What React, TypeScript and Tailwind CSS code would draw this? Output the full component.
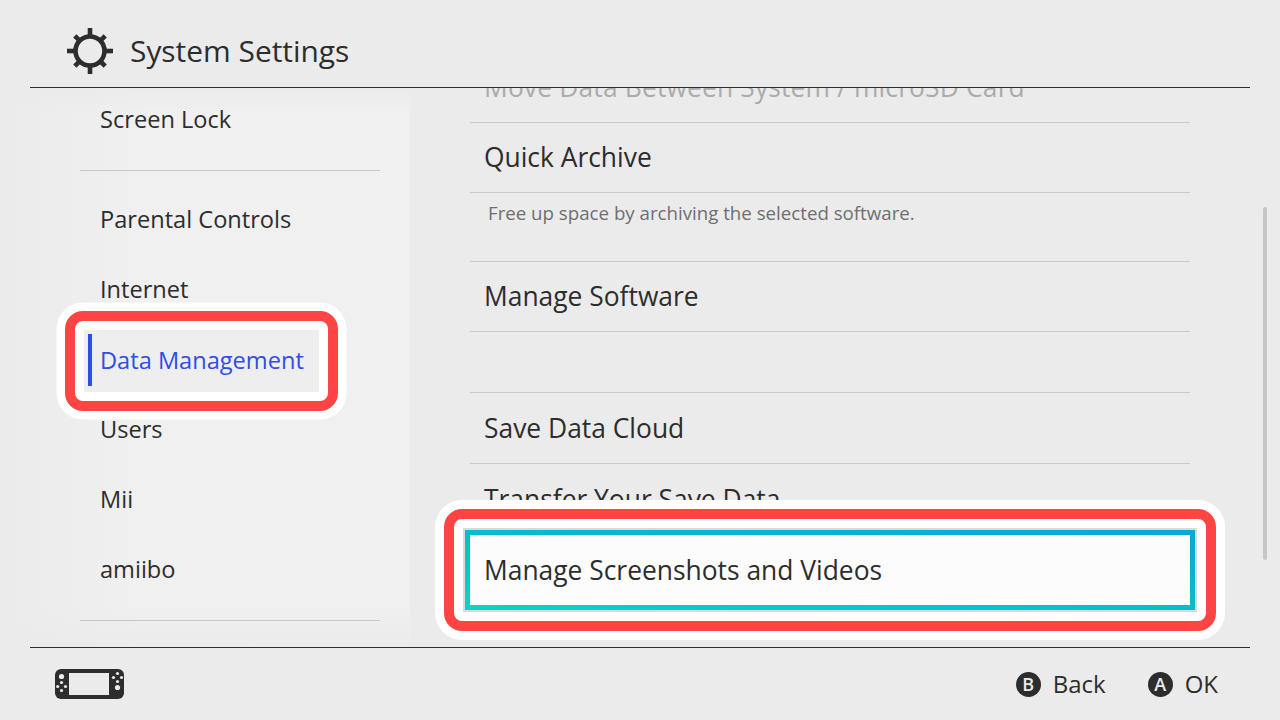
const font = "font-['Open_Sans',sans-serif]";

function SideItem({ label }: { label: string }) {
    return (
        <div className="flex h-[70px] shrink-0 items-center pl-[70px] text-[23.6px] text-[#2d2d2d]">
            {label}
        </div>
    );
}

function Row({ label, className = "" }: { label: string; className?: string }) {
    return (
        <div
            className={`flex shrink-0 items-center border-b border-[#c9c9c9] pl-[14px] text-[26.4px] text-[#2d2d2d] ${className}`}
        >
            {label}
        </div>
    );
}

function Gear() {
    const spokes = [0, 45, 90, 135, 180, 225, 270, 315];
    return (
        <svg width="48" height="48" viewBox="-24 -24 48 48" className="shrink-0">
            <circle r="14.5" fill="none" stroke="#2d2d2d" strokeWidth="4.6" />
            {spokes.map((a) => (
                <line
                    key={a}
                    x1="0"
                    y1="-14"
                    x2="0"
                    y2={a % 90 === 0 ? -23 : -21.5}
                    stroke="#2d2d2d"
                    strokeWidth="4.6"
                    transform={`rotate(${a})`}
                />
            ))}
        </svg>
    );
}

function Handheld() {
    return (
        <svg width="70" height="30" viewBox="0 0 70 30" className="shrink-0">
            <rect x="0" y="0" width="69" height="30" rx="6" fill="#2d2d2d" />
            <rect x="14" y="4" width="40" height="22" fill="#ebebeb" />
            <circle cx="6.5" cy="7.5" r="2.6" fill="#ebebeb" />
            <circle cx="6.5" cy="13.5" r="1.6" fill="#ebebeb" />
            <circle cx="6.5" cy="21.5" r="1.6" fill="#ebebeb" />
            <circle cx="2.7" cy="17.5" r="1.6" fill="#ebebeb" />
            <circle cx="10.5" cy="17.5" r="1.6" fill="#ebebeb" />
            <circle cx="62.5" cy="4.5" r="1.6" fill="#ebebeb" />
            <circle cx="62.5" cy="12.5" r="1.6" fill="#ebebeb" />
            <circle cx="58.5" cy="8.5" r="1.6" fill="#ebebeb" />
            <circle cx="66.5" cy="8.5" r="1.6" fill="#ebebeb" />
            <circle cx="62.5" cy="18.5" r="2.6" fill="#ebebeb" />
        </svg>
    );
}

function Hint({ letter, label }: { letter: string; label: string }) {
    return (
        <div className="flex items-center gap-[12px]">
            <span className="flex h-[25px] w-[25px] items-center justify-center rounded-full bg-[#2d2d2d] text-[18px] font-semibold text-[#ebebeb]">
                {letter}
            </span>
            <span className="text-[24px] text-[#2d2d2d]">{label}</span>
        </div>
    );
}

export default function App() {
    return (
        <div className={`flex h-[720px] w-[1280px] flex-col overflow-hidden bg-[#ebebeb] ${font}`}>
            <header className="mx-[30px] flex h-[88px] shrink-0 items-center gap-[16px] border-b border-[#2d2d2d] pt-[14px] pl-[36px]">
                <Gear />
                <h1 className="mt-[2px] text-[29.9px] font-normal text-[#2d2d2d]">System Settings</h1>
            </header>

            <main className="relative flex min-h-0 flex-1">
                <nav className="flex w-[410px] shrink-0 flex-col overflow-hidden bg-[linear-gradient(to_bottom,#ebebeb,transparent_28px,transparent_calc(100%-40px),#ebebeb),linear-gradient(to_right,#ebebeb,#f0f0f0_35%)] pl-[30px]">
                    <div className="-mt-[3px]">
                        <SideItem label="Screen Lock" />
                    </div>
                    <div className="mt-[15px] mr-[30px] mb-[14px] ml-[50px] border-b border-[#c9c9c9]" />
                    <SideItem label="Parental Controls" />
                    <SideItem label="Internet" />
                    <div className="relative h-[70px] shrink-0">
                        {/* callout drawn over the list */}
                        <div className="absolute top-[-14px] left-[35px] h-[100px] w-[273px] rounded-[18px] border-[10px] border-[#ff4444] bg-white shadow-[0_0_0_8.5px_#ffffff]" />
                        <div className="absolute top-[5px] left-[54px] flex h-[62px] w-[235px] items-center bg-[#eeeeee] pb-[1px] pl-[16px] text-[23.6px] text-[#2f4de8]">
                            <span className="absolute top-[4px] left-[4px] h-[52px] w-[4px] bg-[#2f4de8]" />
                            Data Management
                        </div>
                    </div>
                    <SideItem label="Users" />
                    <SideItem label="Mii" />
                    <SideItem label="amiibo" />
                    <div className="mt-[15px] mr-[30px] ml-[50px] border-b border-[#c9c9c9]" />
                </nav>

                <section className="ml-[60px] flex w-[720px] shrink-0 flex-col">
                    <div className="h-[35px] shrink-0 overflow-hidden border-b border-[#c9c9c9]">
                        <div className="-mt-[18px] pl-[14px] text-[26.4px] leading-[35px] tracking-[0.15px] whitespace-nowrap text-[#ababab]">
                            Move Data Between System / microSD Card
                        </div>
                    </div>
                    <Row label="Quick Archive" className="h-[70px]" />
                    <div className="h-[69px] shrink-0 border-b border-[#c9c9c9] pt-[8px] pl-[18px] text-[18.7px] leading-[24px] text-[#6f6f6f]">
                        Free up space by archiving the selected software.
                    </div>
                    <Row label="Manage Software" className="h-[70px] pt-[1px]" />
                    <div className="h-[61px] shrink-0 border-b border-[#c9c9c9]" />
                    <Row label="Save Data Cloud" className="h-[71px] pt-[1px]" />
                    <div className="flex h-[70px] shrink-0 items-center pt-[1px] pl-[14px] text-[26.4px] text-[#2d2d2d]">
                        Transfer Your Save Data
                    </div>
                    <div className="relative h-[72px] shrink-0">
                        <div className="absolute top-[-25px] left-[-26px] h-[122px] w-[772px] rounded-[18px] border-[10px] border-[#ff4444] bg-white shadow-[0_0_0_9px_#ffffff]" />
                        <div className="absolute top-[-6px] left-[-7px] h-[84px] w-[734px] border-[2px] border-[#d4dcdc]">
                            <div className="h-[80px] w-[730px] bg-gradient-to-tr from-[#12d2be] to-[#08a8d2] p-[5px]">
                                <div className="flex h-[70px] items-center bg-[#fcfcfc] pt-[2px] pl-[14px] text-[26.4px] text-[#2d2d2d]">
                                    Manage Screenshots and Videos
                                </div>
                            </div>
                        </div>
                    </div>
                </section>

                <div className="absolute top-[119px] left-[1263px] h-[353px] w-[4px] rounded-full bg-[#c6c6c6]" />
            </main>

            <footer className="mx-[30px] flex h-[73px] shrink-0 items-center justify-between border-t border-[#2d2d2d] pr-[32px] pl-[25px]">
                <Handheld />
                <div className="flex items-center gap-[42px]">
                    <Hint letter="B" label="Back" />
                    <Hint letter="A" label="OK" />
                </div>
            </footer>
        </div>
    );
}
